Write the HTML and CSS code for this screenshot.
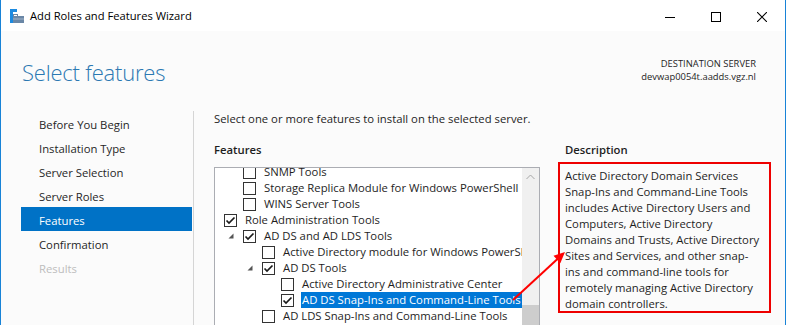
FILE: index.html
```html
<!DOCTYPE html>
<html>
<head>
<meta charset="utf-8">
<title>Add Roles and Features Wizard</title>
<link rel="stylesheet" href="styles.css">
</head>
<body>
<div class="window">
  <header class="titlebar">
    <svg class="app-icon" width="16" height="16" viewBox="0 0 16 16">
      <rect x="1" y="1" width="7" height="3" fill="#1c8ae0"/>
      <rect x="1" y="1" width="3" height="14" fill="#1c8ae0"/>
      <rect x="4.5" y="6.5" width="4" height="2.5" fill="none" stroke="#6a87a6" stroke-width="1"/>
      <rect x="4" y="8" width="11" height="7" fill="#6a87a6"/>
      <rect x="4" y="10.5" width="11" height="1" fill="#9fb3c8"/>
    </svg>
    <span class="title">Add Roles and Features Wizard</span>
    <div class="controls">
      <div class="ctrl"><svg width="10" height="10" viewBox="0 0 10 10"><rect x="0" y="5" width="10" height="1" fill="#000"/></svg></div>
      <div class="ctrl"><svg width="10" height="10" viewBox="0 0 10 10"><rect x="0.5" y="0.5" width="9" height="9" fill="none" stroke="#000" stroke-width="1"/></svg></div>
      <div class="ctrl"><svg width="10" height="10" viewBox="0 0 10 10"><path d="M0 0 L10 10 M10 0 L0 10" stroke="#000" stroke-width="1.1"/></svg></div>
    </div>
  </header>

  <div class="body">
    <div class="header">
      <h1 class="page-title">Select features</h1>
      <div class="dest">
        <div>DESTINATION SERVER</div>
        <div>devwap0054t.aadds.vgz.nl</div>
      </div>
    </div>

    <div class="main">
      <nav class="steps">
        <div class="step">Before You Begin</div>
        <div class="step">Installation Type</div>
        <div class="step">Server Selection</div>
        <div class="step">Server Roles</div>
        <div class="step active">Features</div>
        <div class="step">Confirmation</div>
        <div class="step disabled">Results</div>
      </nav>

      <section class="content">
        <p class="intro">Select one or more features to install on the selected server.</p>
        <div class="columns">
          <div class="features-col">
            <h2 class="label">Features</h2>
            <div class="listbox">
              <div class="tree-viewport">
                <div class="tree">
                  <div class="row l1"><span class="exp"></span><span class="cb"></span><span class="txt">SNMP Tools</span></div>
                  <div class="row l1"><span class="exp"></span><span class="cb"></span><span class="txt">Storage Replica Module for Windows PowerShell</span></div>
                  <div class="row l1"><span class="exp"></span><span class="cb"></span><span class="txt">WINS Server Tools</span></div>
                  <div class="row l0"><span class="cb checked"><svg width="11" height="11" viewBox="0 0 11 11"><path d="M1.5 5.5 L4 8 L9.5 2.5" fill="none" stroke="#1a1a1a" stroke-width="1.7"/></svg></span><span class="txt">Role Administration Tools</span></div>
                  <div class="row l1"><span class="exp"><svg width="6" height="6" viewBox="0 0 6 6"><path d="M5.5 0.5 L5.5 5.5 L0.5 5.5 Z" fill="#555"/></svg></span><span class="cb checked"><svg width="11" height="11" viewBox="0 0 11 11"><path d="M1.5 5.5 L4 8 L9.5 2.5" fill="none" stroke="#1a1a1a" stroke-width="1.7"/></svg></span><span class="txt">AD DS and AD LDS Tools</span></div>
                  <div class="row l2"><span class="exp"></span><span class="cb"></span><span class="txt">Active Directory module for Windows PowerShell</span></div>
                  <div class="row l2"><span class="exp"><svg width="6" height="6" viewBox="0 0 6 6"><path d="M5.5 0.5 L5.5 5.5 L0.5 5.5 Z" fill="#555"/></svg></span><span class="cb checked"><svg width="11" height="11" viewBox="0 0 11 11"><path d="M1.5 5.5 L4 8 L9.5 2.5" fill="none" stroke="#1a1a1a" stroke-width="1.7"/></svg></span><span class="txt">AD DS Tools</span></div>
                  <div class="row l3"><span class="exp"></span><span class="cb"></span><span class="txt">Active Directory Administrative Center</span></div>
                  <div class="row l3"><span class="exp"></span><span class="cb checked"><svg width="11" height="11" viewBox="0 0 11 11"><path d="M1.5 5.5 L4 8 L9.5 2.5" fill="none" stroke="#1a1a1a" stroke-width="1.7"/></svg></span><span class="txt selected">AD DS Snap-Ins and Command-Line Tools</span></div>
                  <div class="row l2"><span class="exp"></span><span class="cb"></span><span class="txt">AD LDS Snap-Ins and Command-Line Tools</span></div>
                </div>
              </div>
              <div class="scrollbar">
                <div class="scroll-up"><svg width="9" height="6" viewBox="0 0 9 6"><path d="M0.5 5 L4.5 1 L8.5 5" fill="none" stroke="#a6a6a6" stroke-width="1"/></svg></div>
                <div class="scroll-thumb"></div>
              </div>
            </div>
          </div>
          <div class="desc-col">
            <h2 class="label desc-label">Description</h2>
            <div class="desc-box">Active Directory Domain Services<br>Snap-Ins and Command-Line Tools<br>includes Active Directory Users and<br>Computers, Active Directory<br>Domains and Trusts, Active Directory<br>Sites and Services, and other snap-<br>ins and command-line tools for<br>remotely managing Active Directory<br>domain controllers.</div>
          </div>
        </div>
      </section>
    </div>
  </div>
</div>
<svg class="callout" width="786" height="325" viewBox="0 0 786 325">
  <line x1="513" y1="300" x2="558" y2="258.5" stroke="#ff0000" stroke-width="2"/>
  <polygon points="565,252 560.3,263.2 553.5,255.8" fill="#ff0000"/>
</svg>
</body>
</html>
```

FILE: styles.css
```css
html, body {
  margin: 0;
  padding: 0;
}
body {
  position: relative;
  width: 786px;
  height: 325px;
  overflow: hidden;
  font-family: "Open Sans", "Noto Sans", sans-serif;
  font-size: 11.3px;
  color: #1e1e1e;
  background: #fbfbfb;
}
.window {
  width: 786px;
  height: 325px;
  box-sizing: border-box;
  border-left: 1px solid #1883d7;
  border-right: 1px solid #1883d7;
  display: flex;
  flex-direction: column;
  overflow: hidden;
  background: #fbfbfb;
}

/* Title bar */
.titlebar {
  height: 31px;
  flex: none;
  background: #ffffff;
  display: flex;
  align-items: center;
}
.app-icon {
  margin-left: 8px;
  margin-top: 1px;
  flex: none;
}
.title {
  margin-left: 5px;
  font-size: 11.2px;
  color: #000;
  line-height: 16px;
}
.controls {
  margin-left: auto;
  display: flex;
  height: 31px;
}
.ctrl {
  width: 46px;
  height: 31px;
  display: flex;
  align-items: center;
  justify-content: center;
}
.ctrl svg {
  display: block;
  margin-top: 2px;
}

/* Header */
.body {
  flex: 1;
  display: flex;
  flex-direction: column;
  min-height: 0;
}
.header {
  height: 79px;
  flex: none;
  display: flex;
  justify-content: space-between;
  align-items: flex-start;
}
.page-title {
  margin: 0;
  padding: 25px 0 0 21px;
  font-size: 22px;
  font-weight: 300;
  line-height: 32px;
  color: #2b78b2;
  letter-spacing: -0.2px;
}
.dest {
  padding: 26px 29px 0 0;
  text-align: right;
  font-size: 9.4px;
  line-height: 13px;
  color: #1e1e1e;
}

/* Main area */
.main {
  flex: 1;
  display: flex;
  min-height: 0;
}
.steps {
  margin-left: 20px;
  margin-top: 1px;
  width: 172px;
  flex: none;
  border-right: 1px solid #d5d5d5;
}
.step {
  width: 171px;
  height: 24px;
  box-sizing: border-box;
  padding: 3px 0 0 18px;
  line-height: 22px;
  color: #262626;
  white-space: nowrap;
}
.step.active {
  background: #0072c6;
  color: #ffffff;
}
.step.disabled {
  color: #bdbdbd;
}

.content {
  flex: 1;
  padding-left: 20px;
  min-width: 0;
}
.intro {
  margin: 1px 0 0 0;
  line-height: 16px;
  white-space: nowrap;
}
.columns {
  margin-top: 15px;
  display: flex;
  gap: 18px;
  align-items: flex-start;
}
.label {
  margin: 0;
  font-size: 11.3px;
  font-weight: 600;
  line-height: 16px;
}
.features-col {
  width: 326px;
  flex: none;
}
.listbox {
  margin-top: 9px;
  height: 200px;
  border: 1px solid #abadb3;
  background: #ffffff;
  display: flex;
}
.tree-viewport {
  flex: 1;
  overflow: hidden;
  min-width: 0;
}
.tree {
  margin-top: -4px;
}
.row {
  height: 16px;
  display: flex;
  align-items: center;
  white-space: nowrap;
}
.row.l0 { padding-left: 9px; }
.row.l1 { padding-left: 9px; }
.row.l2 { padding-left: 28px; }
.row.l3 { padding-left: 47px; }
.exp {
  width: 19px;
  flex: none;
  height: 16px;
  display: flex;
  align-items: center;
}
.exp svg {
  display: block;
  margin-left: 4px;
}
.cb {
  width: 13px;
  height: 13px;
  box-sizing: border-box;
  border: 1px solid #333333;
  background: #ffffff;
  flex: none;
  display: flex;
  align-items: center;
  justify-content: center;
}
.cb svg { display: block; }
.txt {
  margin-left: 8px;
  line-height: 16px;
  height: 16px;
}
.txt.selected {
  margin-left: 7px;
  padding: 0 8px 0 1px;
  background: #0078d7;
  color: #ffffff;
}
.scrollbar {
  width: 17px;
  flex: none;
  background: #f0f0f0;
  display: flex;
  flex-direction: column;
}
.scroll-up {
  height: 17px;
  display: flex;
  align-items: center;
  justify-content: center;
}
.scroll-up svg { display: block; }
.scroll-thumb {
  margin-top: 120px;
  height: 60px;
  background: #cdcdcd;
}

.desc-col {
  width: 213px;
  flex: none;
}
.desc-label {
  padding-left: 7px;
}
.desc-box {
  margin-top: 4px;
  height: 151px;
  box-sizing: border-box;
  border: 2px solid #ee0000;
  padding: 4px 5px 0 5px;
  line-height: 16px;
  white-space: nowrap;
  overflow: hidden;
}

.callout {
  position: absolute;
  left: 0;
  top: 0;
  pointer-events: none;
}
```
